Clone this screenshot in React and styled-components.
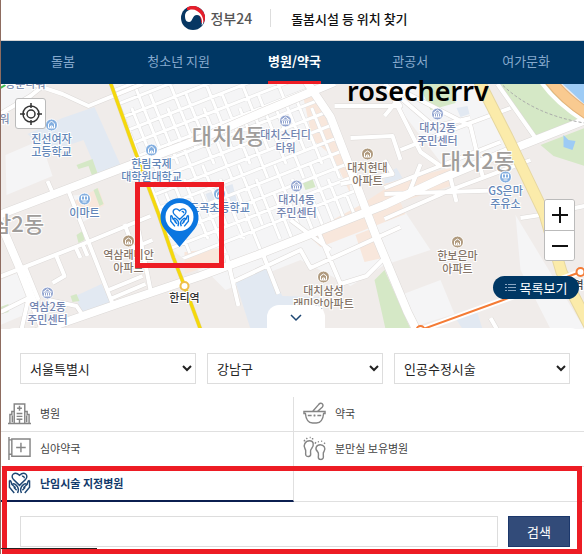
import styled, { createGlobalStyle } from "styled-components";

const GlobalStyle = createGlobalStyle`
  * {
    box-sizing: border-box;
  }
  body {
    margin: 0;
    background: #fff;
    color: #333;
    font-family: "Noto Sans CJK KR", "Noto Sans", sans-serif;
    font-size: 13px;
  }
  button,
  input,
  select {
    font: inherit;
    color: inherit;
  }
`;

const tabs = ["돌봄", "청소년 지원", "병원/약국", "관공서", "여가문화"];

const filters = [
  { label: "시도", value: "서울특별시" },
  { label: "시군구", value: "강남구" },
  { label: "시술", value: "인공수정시술" },
];

const districts = [
  { name: "대치4동", x: 228, y: 144 },
  { name: "대치2동", x: 477, y: 169 },
  { name: "역삼2동", x: 7, y: 232 },
];

const places = [
  { x: 51, y: 125, type: "school", lines: ["진선여자", "고등학교"] },
  { x: 151, y: 150, type: "school", lines: ["한림국제", "대학원대학교"] },
  { x: 285, y: 121, type: "office", lines: ["대치스터디", "타워"] },
  { x: 367, y: 154, type: "home", lines: ["대치현대", "아파트"] },
  { x: 296, y: 186, type: "office", lines: ["대치4동", "주민센터"] },
  { x: 219, y: 194, type: "school", lines: ["도곡초등학교"] },
  { x: 84, y: 199, type: "shop", lines: ["이마트"] },
  { x: 128, y: 241, type: "home", lines: ["역삼래미안", "아파트"] },
  { x: 47, y: 293, type: "office", lines: ["역삼2동", "주민센터"] },
  { x: 437, y: 114, type: "office", lines: ["대치2동", "주민센터"] },
  { x: 505, y: 177, type: "shop", lines: ["GS은마", "주유소"] },
  { x: 457, y: 242, type: "home", lines: ["한보은마", "아파트"] },
  { x: 323, y: 277, type: "home", lines: ["대치삼성", "래미안아파트"] },
];

const placeColors = {
  school: { dot: "#84afe0", text: "#6286b8" },
  shop: { dot: "#84afe0", text: "#6286b8" },
  office: { dot: "#93a5d0", text: "#7284b0" },
  home: { dot: "#b09a7e", text: "#857568" },
};

const placeGlyphs = {
  school: "M-3 3V-1L0-4L3-1V3zM-1 3V1H1V3",
  shop: "M-3-3H3V1H-3zM-2 3H2M0-3V1",
  office: "M-4-1L0-4L4-1zM-3 0V3M-1 0V3M1 0V3M3 0V3M-4 3H4",
  home: "M-3 3V-1L0-3L3-1V3zM-1 3V1H1V3",
};

const mainRoads =
  "M-4 216L130 165L200 139L260 113L334 82 M30 334L117 304L200 276L257 255L323 229L384 205L440 179L517 147L588 119 M305 80L330 117L347 161L367 214L377 240L407 312L417 332 M-4 214L20 270L45 334";

const sideRoads =
  "M-4 278L80 245L150 216 M68 191L113 306 M-4 116L30 96L45 84 M20 80L62 94L88 106L142 84 M47 181L54 197 M0 312L28 298 M28 298L20 334 M48 300L76 306L84 318 M25 268L38 300 M55 254L64 276L52 283 M75 247L80 258 M82 244L87 256 M108 290L142 276 M112 298L145 284 M138 230L150 290 M124 224L133 248L152 240 M226 255L238 306 M262 253L278 294 M232 282L300 250L310 268L400 227 M318 232L340 284L366 276L384 258 M290 220L330 250 M340 184L392 174L384 160 M334 106L400 106L384 84 M392 96L420 152L440 166 M400 150L440 134L510 108 M384 116L404 92L470 126L482 176 M497 84L535 138 M384 188L500 142 M384 194L510 190 M408 194L420 164 M450 178L456 202 M436 126L470 118 M384 219L450 190L530 160 M540 215L584 206 M520 218L540 215 M490 318L498 332 M384 84L440 132 M350 138L392 136L400 160";

const yellowLine = "M109 80L133 147L158 214L173 258L184 286L201 332";

// Rows follow the avenue, columns cross it
const gridRows = Array.from({ length: 14 }, (_, i) => `M100 ${96 + i * 15}L400 ${-22 + i * 15}`).join("");
const gridColumns = Array.from({ length: 28 }, (_, i) => {
  const x = 60 + i * 12;
  const top = 80 + (i % 3) * 14;
  return `M${x + (top - 80) * 0.4} ${top}l28 70m6 15l24 60`;
}).join("");

const HandsPath = () => (
  <>
    <path d="M12 15L5.500 8.500C2 4.500 7-.5 12 4.500C17-.5 22 4.500 18.500 8.500z" />
    <path d="M14.500 5.500c1.500-.5 2.500.5 2.500 2" />
    <path d="M1.500 10v7l5 6M1.500 10c2 0 2 2 2.500 4l4 3.500M5 14c1-1.500 3 0 5 2.500c1 1.500 1 4 0 6.500M6 17l3 3" />
    <path d="M22.500 10v7l-5 6M22.500 10c-2 0-2 2-2.500 4l-4 3.500M19 14c-1-1.500-3 0-5 2.500c-1 1.500-1 4 0 6.500M18 17l-3 3" />
  </>
);

const CityMap = () => (
  <MapDrawing viewBox="0 84 584 245" preserveAspectRatio="xMidYMid slice" role="img" aria-label="지도">
    <defs>
      <clipPath id="blocks">
        <path d="M112 84H305L330 120L366 214L323 226L200 272L172 250L135 160z" />
      </clipPath>
    </defs>
    <rect x="0" y="84" width="584" height="245" fill="#f0ecea" />
    <path d="M112 84H305L367 212L323 226L200 272L172 250L135 160z M5 155L40 140L52 176L6 195z M0 84H45L30 96L0 115z M384 84H480L515 150L450 175L400 110z M70 196L84 194L94 216L82 222z M0 280L24 270L35 310L0 325z M205 270L400 205L430 250L384 265L350 286L300 260L225 290z M403 294L440 280L454 314L415 326z M515 215L584 329H550L520 270z" fill="#f5f5f6" />
    <path d="M62 118L94 107L120 165L98 175L83 140L48 152L27 134z M75 296L101 284L113 308L84 319z M234 279L266 268L282 296L320 297V329H250z M205 194L232 184L237 203L210 207z M456 108L467 106L469 114L460 117z M455 318L476 310L482 329H462z M384 174L396 168L402 178L384 184z" fill="#e2e9f2" />
    <path d="M303 98L318 94L347 160L350 194L332 156L312 140z M360 205L392 184L405 214L320 247L306 234z M384 184L450 168L450 186L390 205z M184 252L220 248V262L184 274z M355 235L373 228L382 258L364 262z M72 202L98 188L104 205L90 213z" fill="#f8e7dc" />
    <path d="M499 84H556L588 116V120L533 140z M540 145L584 128V166L553 156z M384 270L410 329H385L374 280z M418 84H455V103L430 110z M302 182L312 179L315 187L305 190z M76 165L92 159L98 176L92 177L88 166L78 169z M93 190L97 188L103 204L99 206z M76 235L82 231L84 240L78 243z M70 296L76 294L79 301L72 302z M0 307L8 304V312L0 314z" fill="#d5e8c6" />
    <path d="M560 82H588V108z M563 135L568 140L575 141L572 150L563 147z" fill="#9dcbf5" />
    <g clipPath="url(#blocks)" fill="none">
      <path d={gridRows + gridColumns} stroke="#e0e0e0" strokeWidth="4" />
      <path d={gridRows + gridColumns} stroke="#fff" strokeWidth="3" />
    </g>
    <g fill="none" strokeLinejoin="round">
      <path d={sideRoads} stroke="#dcd9d7" strokeWidth="5" />
      <path d={mainRoads} stroke="#dcd9d7" strokeWidth="9" />
      <path d={sideRoads} stroke="#fff" strokeWidth="4" />
      <path d={mainRoads} stroke="#fff" strokeWidth="8" />
      <path d="M538 78Q554 104 592 126" stroke="#fff" strokeWidth="4" />
      <path d="M548 78Q564 100 592 117" stroke="#e5b27a" strokeWidth="12" />
      <path d="M548 78Q564 100 592 117" stroke="#f9ca90" strokeWidth="10" />
      <path d="M499 82Q530 114 584 123" stroke="#aaa" strokeWidth="1" strokeDasharray="3 2" />
      <path d="M478 80L507 137L544 214L561 272L590 328" stroke="#e6d7a0" strokeWidth="12" />
      <path d="M478 80L507 137L544 214L561 272L590 328" stroke="#fbebaa" strokeWidth="10" />
      <path d={yellowLine} stroke="#e2d382" strokeWidth="4" />
      <path d={yellowLine} stroke="#f5d90a" strokeWidth="3" />
      <path d="M420 330L500 301L580 272" stroke="#fff" strokeWidth="6" />
      <path d="M420 330L500 301L580 272" stroke="#f47b35" strokeWidth="2" />
      <path d="M0 88l5-3" stroke="#3fbd4b" strokeWidth="2" />
    </g>
    <circle cx="420" cy="330" r="4" fill="#fff" stroke="#f47b35" strokeWidth="2" />
    <circle cx="580" cy="272" r="4" fill="#fff" stroke="#f47b35" strokeWidth="2" />
    <circle cx="184" cy="286" r="4" fill="#fff" stroke="#eebf4a" strokeWidth="2" />
    {districts.map(({ name, x, y }) => (
      <DistrictLabel key={name} x={x} y={y}>
        {name}
      </DistrictLabel>
    ))}
    {places.map(({ x, y, type, lines }) => (
      <g key={lines.join()}>
        <circle cx={x} cy={y} r="6" fill={placeColors[type].dot} stroke="#fff" />
        <path d={placeGlyphs[type]} transform={`translate(${x} ${y})`} fill="none" stroke="#fff" />
        <PlaceLabel y={y + 18} fill={placeColors[type].text}>
          {lines.map((line, i) => (
            <tspan key={line} x={x} dy={i * 13}>
              {line}
            </tspan>
          ))}
        </PlaceLabel>
      </g>
    ))}
    <PlaceLabel x="25" y="88" fill="#7f8faf">동문타워</PlaceLabel>
    <PlaceLabel x="4" y="123" fill="#7f8faf">워</PlaceLabel>
    <PlaceLabel x="184" y="302" fill="#333">한티역</PlaceLabel>
    <PlaceLabel x="583" y="289" fill="#444">역을</PlaceLabel>
    <path d="M179 247L164 229A19 19 0 1 1 194 229z" fill="#0b76e0" />
    <circle cx="179" cy="217" r="14" fill="#fff" />
    <g transform="translate(169 207) scale(.84)" fill="none" stroke="#0b76e0" strokeWidth="1.600">
      <HandsPath />
    </g>
  </MapDrawing>
);

const HospitalIcon = () => (
  <CategoryIcon viewBox="0 0 24 24">
    <path d="M6.500 22V2h11v20M6.500 10H4v3H2v9M17.500 10H20v3h2v9M0 22.500h24M12 4v5M9.500 6.500h5M9 12h6M9 15h6M9 18h6M12 18v4M4.500 14v7M19.500 14v7" />
  </CategoryIcon>
);

const MortarIcon = () => (
  <CategoryIcon viewBox="0 0 24 24">
    <path d="M1 10h22v2h-1.500C21 18 18 22 14 22h-4c-4 0-7-4-7.500-10H1zM10 10l6-7c3-4 6.500 0 4 2.500L15 10M5 14h4M15 14h4M11 14h2M12 13v2" />
  </CategoryIcon>
);

const PharmacySignIcon = () => (
  <CategoryIcon viewBox="0 0 24 24">
    <path d="M1 0v24M1 3h3M1 18h3M4 2h19v18H4zM13.500 6v10M8.500 11h10" />
  </CategoryIcon>
);

const FeetIcon = () => (
  <CategoryIcon viewBox="0 0 24 24">
    <path d="M7 4C2 4 0 9 2 12c2 3 0 4 1 7c1 2 5 2 5-1c0-3-1-4 1-6C12 8 11 4 7 4zM18 8c4 0 6 4 4 7c-2 2 0 4-1 7c-1 2-5 2-5-1c0-3 1-4-1-6c-3-3-1-7 3-7z" />
    <path d="M1 4.500l1-1.500M3.500 2l1-1M7 .5h1M10 1v1.500M12.500 7l1-1.500M15.500 5h1M19 4.500h1M22 6l1 1" />
  </CategoryIcon>
);

const HandsIcon = () => (
  <CategoryIcon viewBox="0 0 24 24" $active>
    <HandsPath />
  </CategoryIcon>
);

const categories = [
  { name: "병원", Icon: HospitalIcon },
  { name: "약국", Icon: MortarIcon },
  { name: "심야약국", Icon: PharmacySignIcon },
  { name: "분만실 보유병원", Icon: FeetIcon },
  { name: "난임시술 지정병원", Icon: HandsIcon, active: true },
];

const App = () => {
  return (
    <Page>
      <GlobalStyle />
      <Header>
        <Brand href='#'>
          <svg width='24' height='24' viewBox='0 0 24 24' aria-hidden='true'>
            <circle cx='12' cy='12' r='12' fill='#073763' />
            <path d='M6 1.600A12 12 0 0 1 23 16.500L20 17C21 9 14 3 6 4z' fill='#e61e2b' />
            <path d='M4 10C4 4 11 2 16 5C21 8 23 13 22 18L20.500 19.500C22 14 20 9 16 9C11 9 12 16 8 16C5 16 4 13 4 10z' fill='#fff' />
          </svg>
          정부24
        </Brand>
        <Title>돌봄시설 등 위치 찾기</Title>
      </Header>
      <Nav>
        {tabs.map((tab) => (
          <Tab key={tab} href='#' $active={tab === "병원/약국"}>
            <span>{tab}</span>
          </Tab>
        ))}
      </Nav>
      <MapArea>
        <CityMap />
        <Watermark>rosecherrv</Watermark>
        <LocateButton aria-label='현재 위치'>
          <svg width='24' height='24' viewBox='0 0 24 24' fill='none' stroke='#333' strokeWidth='1.500'>
            <circle cx='12' cy='12' r='8' />
            <circle cx='12' cy='12' r='4' />
            <path d='M12 1v5M12 18v5M1 12h5M18 12h5' />
          </svg>
        </LocateButton>
        <ZoomButtons>
          <ZoomButton aria-label='확대'>
            <svg width='18' height='18' viewBox='0 0 18 18' stroke='#111' strokeWidth='2'>
              <path d='M1 9h16M9 1v16' />
            </svg>
          </ZoomButton>
          <ZoomButton aria-label='축소'>
            <svg width='18' height='18' viewBox='0 0 18 18' stroke='#111' strokeWidth='2'>
              <path d='M1 9h16' />
            </svg>
          </ZoomButton>
        </ZoomButtons>
        <ListButton>
          <svg width='11' height='9' viewBox='0 0 11 9' stroke='#8aa6c2'>
            <path d='M0 1.500h2M3 1.500h8M0 4.500h2M3 4.500h8M0 7.500h2M3 7.500h8' />
          </svg>
          목록보기
        </ListButton>
        <MapHighlight />
      </MapArea>
      <Panel>
        <Handle aria-label='접기'>
          <svg width='12' height='8' viewBox='0 0 12 8' fill='none' stroke='#1d4673' strokeWidth='1.500'>
            <path d='M1 1l5 5l5-5' />
          </svg>
        </Handle>
        <Filters>
          {filters.map(({ label, value }) => (
            <Select key={label} aria-label={label}>
              <option>{value}</option>
            </Select>
          ))}
        </Filters>
        <Categories>
          {categories.map(({ name, Icon, active }) => (
            <Category key={name} $active={active}>
              <Icon />
              {name}
            </Category>
          ))}
          <EmptyCell />
        </Categories>
        <Search onSubmit={(e) => e.preventDefault()}>
          <SearchInput type='text' aria-label='검색어' />
          <SearchButton>검색</SearchButton>
        </Search>
        <PanelHighlight />
        <StatusStrip />
      </Panel>
    </Page>
  );
};

const Page = styled.div`
  border-left: 1px solid #8e6c60;
`;

const Header = styled.header`
  display: flex;
  align-items: center;
  justify-content: center;
  height: 41px;
  padding: 0 0 4px 4px;
  border-bottom: 1px solid #d5d5d5;
`;

const Brand = styled.a`
  display: flex;
  align-items: center;
  gap: 5px;
  padding-right: 18px;
  border-right: 1px solid #ddd;
  color: #555;
  font-size: 14px;
  font-weight: 500;
  line-height: 18px;
  text-decoration: none;
  svg {
    margin: -3px 0;
  }
`;

const Title = styled.h1`
  margin: 0;
  padding-left: 20px;
  color: #111;
  font-size: 13px;
  font-weight: 500;
`;

const Nav = styled.nav`
  display: grid;
  grid-template-columns: repeat(5, 1fr);
  height: 43px;
  padding-left: 4px;
  background: #003764;
`;

const Tab = styled.a`
  display: flex;
  justify-content: center;
  color: ${({ $active }) => ($active ? "#fff" : "#86a9cd")};
  font-weight: ${({ $active }) => ($active ? 700 : 400)};
  line-height: 40px;
  text-decoration: none;
  span {
    border-bottom: 3px solid ${({ $active }) => ($active ? "#ed1c24" : "transparent")};
  }
`;

const MapArea = styled.section`
  position: relative;
  height: 245px;
`;

const MapDrawing = styled.svg`
  display: block;
  width: 100%;
  height: 100%;
`;

const DistrictLabel = styled.text`
  fill: #a09d9b;
  stroke: #fff;
  stroke-width: 2px;
  paint-order: stroke;
  font-size: 22px;
  font-weight: 500;
  text-anchor: middle;
`;

const PlaceLabel = styled.text`
  stroke: #fff;
  stroke-width: 2px;
  paint-order: stroke;
  font-size: 11px;
  font-weight: 500;
  text-anchor: middle;
`;

const Watermark = styled.div`
  position: absolute;
  top: -11px;
  left: 346px;
  color: #000;
  font-family: "Noto Sans", sans-serif;
  font-size: 27px;
  font-weight: 600;
  line-height: 36px;
`;

const MapButton = styled.button`
  display: flex;
  align-items: center;
  justify-content: center;
  padding: 0;
  border: 1px solid #bbb;
  background: #fff;
`;

const LocateButton = styled(MapButton)`
  position: absolute;
  top: 14px;
  left: 14px;
  width: 31px;
  height: 31px;
  border-radius: 3px;
`;

const ZoomButtons = styled.div`
  position: absolute;
  top: 115px;
  right: 9px;
  overflow: hidden;
  border: 1px solid #bbb;
  border-radius: 3px;
`;

const ZoomButton = styled(MapButton)`
  width: 29px;
  height: 30px;
  border: 0;
  & + & {
    border-top: 1px solid #bbb;
  }
`;

const ListButton = styled.button`
  position: absolute;
  right: 5px;
  bottom: 30px;
  display: flex;
  align-items: center;
  justify-content: center;
  gap: 4px;
  width: 86px;
  height: 23px;
  padding: 0;
  border: 0;
  border-radius: 12px;
  background: #003764;
  color: #fff;
`;

const Highlight = styled.div`
  position: absolute;
  border: 5px solid #ed1c24;
  pointer-events: none;
`;

const MapHighlight = styled(Highlight)`
  top: 98px;
  left: 134px;
  width: 89px;
  height: 86px;
`;

const Panel = styled.main`
  position: relative;
  margin-top: -1px;
  padding: 25px 0 7px;
  border-radius: 14px 14px 0 0;
  background: #fff;
`;

const Handle = styled.button`
  position: absolute;
  top: -23px;
  left: 50%;
  width: 58px;
  height: 24px;
  margin-left: -26px;
  padding: 0;
  border: 0;
  border-radius: 12px 12px 0 0;
  background: #fff;
  line-height: 16px;
`;

const Filters = styled.div`
  display: grid;
  grid-template-columns: repeat(3, 1fr);
  gap: 11px;
  padding: 0 14px 0 19px;
`;

const Select = styled.select`
  min-width: 0;
  height: 31px;
  padding: 0 4px 0 5px;
  border: 1px solid #ddd;
  border-radius: 0;
  background: #fff;
  color: #222;
`;

const Categories = styled.div`
  display: grid;
  grid-template-columns: 101fr 100fr;
  margin-top: 13px;
`;

const Category = styled.button`
  display: flex;
  align-items: center;
  gap: 9px;
  height: 35px;
  padding: 0 0 2px 7px;
  border: 0;
  border-bottom: ${({ $active }) => ($active ? "2px solid #0b1f50" : "1px solid #e0e0e0")};
  background: none;
  color: ${({ $active }) => ($active ? "#123a6b" : "#444")};
  font-size: 11px;
  font-weight: ${({ $active }) => ($active ? 700 : 400)};
  &:nth-child(odd) {
    border-right: 1px solid #e0e0e0;
  }
  &:nth-child(even) {
    padding-left: 9px;
  }
`;

const EmptyCell = styled.div`
  border-bottom: 1px solid #e0e0e0;
`;

const CategoryIcon = styled.svg`
  width: 23px;
  height: 23px;
  overflow: visible;
  fill: none;
  stroke: ${({ $active }) => ($active ? "#1d4673" : "#858585")};
  stroke-width: 1.5px;
`;

const Search = styled.form`
  display: flex;
  gap: 10px;
  padding: 14px 14px 0 19px;
`;

const SearchInput = styled.input`
  flex: 1;
  min-width: 0;
  height: 31px;
  padding: 0 10px;
  border: 1px solid #ddd;
`;

const SearchButton = styled.button`
  width: 62px;
  padding: 0;
  border: 1px solid #1b376b;
  background: #324b79;
  color: #fff;
`;

const PanelHighlight = styled(Highlight)`
  right: 2px;
  bottom: 0;
  left: 1px;
  height: 88px;
`;

const StatusStrip = styled.div`
  position: absolute;
  bottom: 5px;
  left: 0;
  width: 96px;
  height: 1px;
  background: #222;
`;

export default App;
